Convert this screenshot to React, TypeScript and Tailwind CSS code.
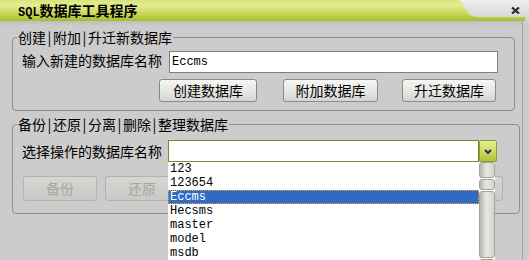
import React from "react";

const items = ["123", "123654", "Eccms", "Hecsms", "master", "model", "msdb", "tempdb"];
const selected = "Eccms";

function Legend({ parts, tail }: { parts: string[]; tail?: string }) {
  return (
    <legend className="px-[1px] text-[14px] leading-[16px] text-black">
      {parts.map((p, i) => (
        <React.Fragment key={p}>
          {i > 0 && <span className="inline-block w-[7px] text-center">|</span>}
          {p}
        </React.Fragment>
      ))}
      {tail}
    </legend>
  );
}

function Button({ label, width, disabled }: { label: string; width: string; disabled?: boolean }) {
  return (
    <div
      className={
        disabled
          ? `${width} flex h-[25px] shrink-0 items-center justify-center rounded-[3px] border border-[#b4b4ac] bg-[linear-gradient(#d6d6d2,#c9c9c5)] text-[14px] text-[#a6a69f]`
          : `${width} flex h-[23px] shrink-0 items-center justify-center rounded-[3px] border border-[#8a8a8a] bg-[linear-gradient(#f6f6f4,#e4e4e0_60%,#d4d4d0)] text-[14px] text-black`
      }
    >
      {label}
    </div>
  );
}

function ScrollPiece({ h }: { h: string }) {
  return (
    <div className={`${h} shrink-0 rounded-[3px] border border-[#a2a29a] bg-[linear-gradient(90deg,#b4b4ac,#e8e8e2_45%,#d4d4ce)]`} />
  );
}

export default function App() {
  return (
    <div className="flex h-[260px] w-[529px] flex-col overflow-hidden bg-[#cccccc] font-['Noto_Sans_CJK_SC',sans-serif]">
      {/* title bar */}
      <div className="flex h-[21px] shrink-0">
        <div className="flex flex-1 items-center bg-[linear-gradient(#d9e47c,#e4ed93_25%,#d3e070_50%,#bccd44_80%,#a8ba2c)] pl-[18px]">
          <span className="text-[14px] font-bold leading-none text-black">
            <span className="font-['Liberation_Mono',monospace] text-[12px]">SQL</span>数据库工具程序
          </span>
        </div>
        <div className="relative flex w-[75px] items-start justify-end pr-[9px] pt-[7px]">
          <svg className="absolute inset-0" width="75" height="21" viewBox="0 0 75 21">
            <defs>
              <linearGradient id="gray" x1="0" y1="0" x2="0" y2="1">
                <stop offset="0" stopColor="#efefef" />
                <stop offset="1" stopColor="#d2d2d2" />
              </linearGradient>
              <linearGradient id="green" x1="0" y1="0" x2="0" y2="1">
                <stop offset="0" stopColor="#d9e47c" />
                <stop offset="0.25" stopColor="#e4ed93" />
                <stop offset="0.5" stopColor="#d3e070" />
                <stop offset="0.8" stopColor="#bccd44" />
                <stop offset="1" stopColor="#a8ba2c" />
              </linearGradient>
            </defs>
            <rect x="0" y="0" width="75" height="21" fill="url(#gray)" />
            <path
              d="M0 0 L2 0 C8 0 10 5 12 9 C14 14 17 17 24 17 L71 17 L71 21 L0 21 Z"
              fill="url(#green)"
            />
          </svg>
          <svg className="relative" width="9" height="7" viewBox="0 0 9 7">
            <path d="M1 0.5 L8 6.5 M8 0.5 L1 6.5" stroke="#2e2e2e" strokeWidth="2.2" />
          </svg>
        </div>
      </div>

      <div className="flex flex-1">
        <div className="w-[522px] shrink-0">
          <div className="h-[5px] bg-[linear-gradient(#bebebe,#cccccc)]" />

          {/* create / attach / upgrade */}
          <fieldset className="ml-[12px] mt-[3px] w-[503px] rounded-[4px] border border-[#8f8f8f] px-[4px] pb-[8px]">
            <Legend parts={["创建", "附加", "升迁新数据库"]} />
            <div className="pl-[5px] pr-[12px]">
              <div className="mt-[6px] flex h-[22px] items-center">
                <div className="mb-[5px] w-[147px] shrink-0 text-[14px] leading-[16px] text-black">输入新建的数据库名称</div>
                <div className="flex h-[22px] flex-1 items-center border border-[#7f7f7f] bg-white pl-[2px] font-['Liberation_Mono',monospace] text-[12px] text-black">
                  Eccms
                </div>
              </div>
              <div className="mt-[6px] flex">
                <div className="ml-[137px]">
                  <Button label="创建数据库" width="w-[98px]" />
                </div>
                <div className="ml-[26px]">
                  <Button label="附加数据库" width="w-[95px]" />
                </div>
                <div className="ml-[24px]">
                  <Button label="升迁数据库" width="w-[94px]" />
                </div>
              </div>
            </div>
          </fieldset>

          {/* backup / restore / ... */}
          <fieldset className="ml-[12px] mt-[5px] w-[503px] rounded-[4px] border border-[#8f8f8f] px-[4px] pb-[12px]">
            <Legend parts={["备份", "还原", "分离", "删除", "整理数据库"]} />
            <div className="pl-[5px] pr-[12px]">
              <div className="mt-[8px] flex h-[22px] items-center">
                <div className="w-[146px] shrink-0 pl-[0px] text-[14px] leading-[16px] text-black">选择操作的数据库名称</div>
                <div className="relative flex">
                  <div className="h-[22px] w-[311px] border border-[#7b8a2e] bg-white" />
                  <div className="flex h-[22px] w-[18px] items-center justify-center rounded-[2px] border border-[#8d9c34] bg-[linear-gradient(#e6ee8e,#cbd958_55%,#b3c33a)]">
                    <svg width="8" height="5" viewBox="0 0 8 5">
                      <path d="M1 1 L4 4 L7 1" fill="none" stroke="#1f2f7c" strokeWidth="2" />
                    </svg>
                  </div>

                  {/* open dropdown list */}
                  <div className="absolute left-0 top-[22px] z-10 flex h-[120px] w-[327px] bg-white">
                    <div className="w-[311px] font-['Liberation_Mono',monospace] text-[12px] leading-[14px] text-black">
                      {items.map((it) =>
                        it === selected ? (
                          <div
                            key={it}
                            className="h-[14px] border border-dotted border-[#f2a33a] bg-[#316ac5] pl-[1px] leading-[12px] text-white"
                          >
                            {it}
                          </div>
                        ) : (
                          <div key={it} className="h-[14px] pl-[2px]">
                            {it}
                          </div>
                        )
                      )}
                    </div>
                    <div className="flex w-[16px] flex-col gap-[1px]">
                      <ScrollPiece h="h-[16px]" />
                      <ScrollPiece h="h-[11px]" />
                      <ScrollPiece h="h-[67px]" />
                      <ScrollPiece h="h-[30px]" />
                    </div>
                  </div>
                </div>
              </div>
              <div className="ml-[1px] mt-[14px] flex gap-[8px]">
                <Button label="备份" width="w-[74px]" disabled />
                <Button label="还原" width="w-[74px]" disabled />
                <Button label="分离" width="w-[74px]" disabled />
                <Button label="删除" width="w-[74px]" disabled />
                <Button label="整理" width="w-[74px]" disabled />
                <Button label="" width="w-[70px]" disabled />
              </div>
            </div>
          </fieldset>
        </div>
        <div className="w-px bg-[#a4a4a4]" />
        <div className="flex-1" />
      </div>
    </div>
  );
}
